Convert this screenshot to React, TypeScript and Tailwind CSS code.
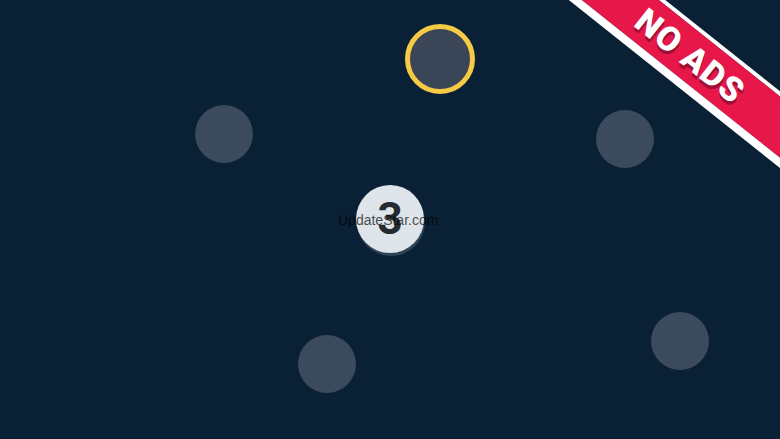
const dots = [
  { x: 224, y: 134 },
  { x: 625, y: 139 },
  { x: 327, y: 364 },
  { x: 680, y: 341 },
];

export default function App() {
  return (
    <div className="relative h-[439px] w-[780px] overflow-hidden bg-[#0a2034] font-['Roboto',sans-serif]">
      {dots.map((d, i) => (
        <div
          key={i}
          className="absolute h-[58px] w-[58px] -translate-x-1/2 -translate-y-1/2 rounded-full bg-[#3b4a5d]"
          style={{ left: d.x, top: d.y }}
        />
      ))}

      {/* active target */}
      <div className="absolute left-[405px] top-[24px] h-[70px] w-[70px] rounded-full border-[5px] border-[#f5ca45] bg-[#3a4658]" />

      {/* counter */}
      <div className="absolute left-[356px] top-[185px] flex h-[68px] w-[68px] items-center justify-center rounded-full bg-[#dde4ea] shadow-[1px_3px_0_#2f4358]">
        <span className="text-[44px] font-bold leading-none text-[#262b31]">3</span>
      </div>

      {/* watermark */}
      <div className="absolute left-[338px] top-[213px] font-['Liberation_Sans',sans-serif] text-[14px] leading-none text-black/70">
        UpdateStar.com
      </div>

      {/* ribbon */}
      <div className="absolute left-[500px] top-[36px] flex h-[60px] w-[400px] rotate-[38.5deg] flex-col">
        <div className="h-[4px] bg-white" />
        <div className="flex flex-1 items-center justify-center bg-[#e8174a]">
          <span className="ml-[-28px] text-[34px] font-black leading-none tracking-[1px] text-white [text-shadow:2px_3px_0_#9e0f33]">
            NO ADS
          </span>
        </div>
        <div className="h-[8px] bg-white" />
      </div>
    </div>
  );
}
